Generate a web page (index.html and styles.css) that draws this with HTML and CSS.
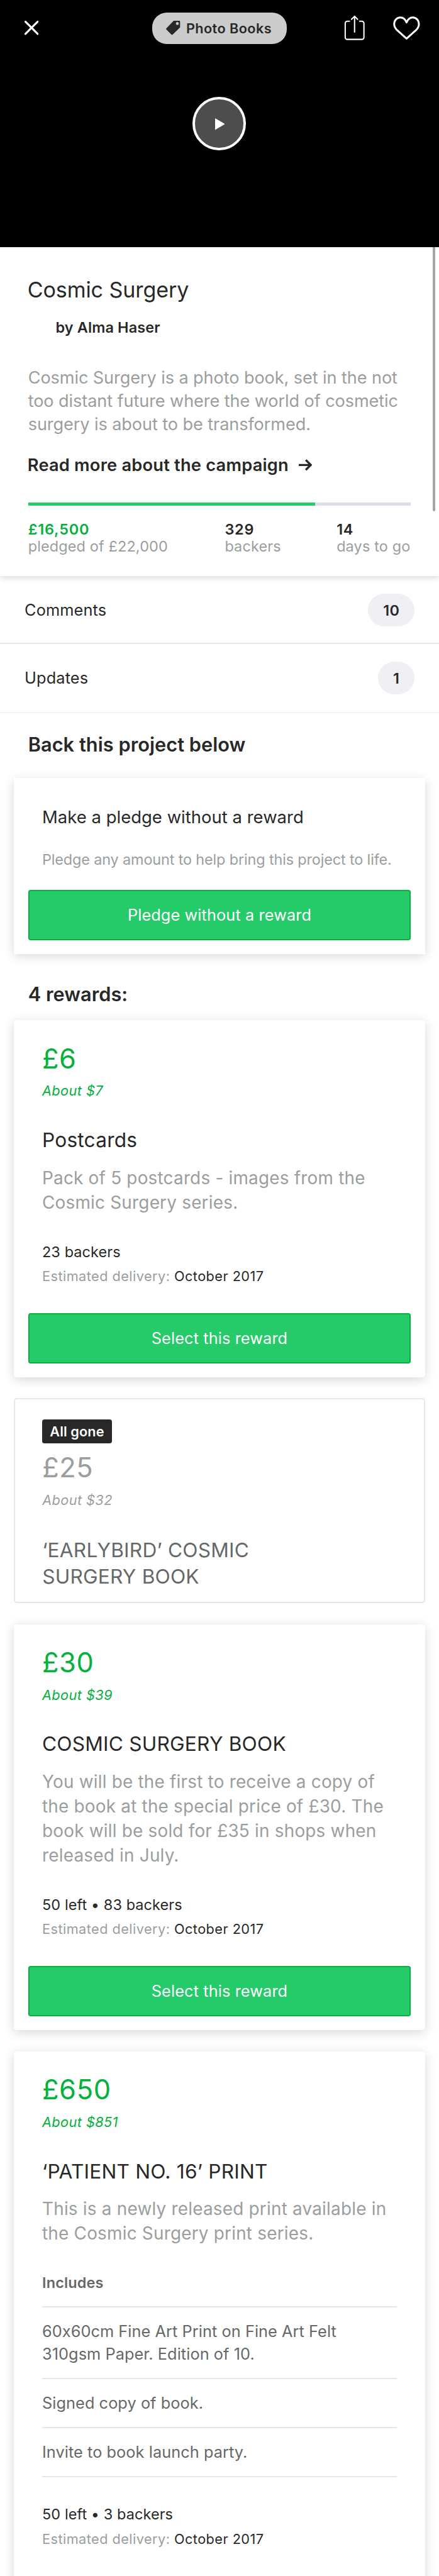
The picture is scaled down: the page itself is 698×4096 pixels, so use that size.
FILE: index.html
```html
<!DOCTYPE html>
<html lang="en">
<head>
<meta charset="utf-8">
<title>Cosmic Surgery</title>
<link rel="stylesheet" href="styles.css">
</head>
<body>
<main class="page">
  <header class="hero">
    <nav class="topbar">
      <svg class="icon-close" width="24" height="24" viewBox="0 0 24 24"><path d="M1.5 1.5l21 21M22.500 1.500l-21 21"/></svg>
      <span class="chip">
        <svg width="24" height="25" viewBox="0 0 24 25"><path fill-rule="evenodd" d="M13.500 0H22.500Q24 0 24 1.500V10.500Q24 11.500 23.300 12.200L11.300 23.700Q10.200 24.600 9.200 23.700L.6 15Q-.4 14 .6 12.900L12.200.7Q12.800 0 13.500 0ZM19.300 2.200A2.500 2.500 0 1 0 19.300 7.200A2.500 2.500 0 1 0 19.300 2.200Z"/></svg>
        Photo Books
      </span>
      <svg class="icon-share" width="36" height="44" viewBox="0 0 36 44"><path d="M9.300 10.500H6Q2 10.500 2 14.500V37.500Q2 41.500 6 41.500H30Q34 41.500 34 37.500V14.500Q34 10.500 30 10.500H26.700M18 29V2M12.800 7.200L18 2L23.200 7.200"/></svg>
      <svg class="icon-heart" width="46" height="40" viewBox="0 0 46 40"><path d="M23 10.500C20.500 4.500 17 2 12.500 2C6 2 1.900 7.200 1.900 13.500C1.900 17.500 3.800 20.500 6.500 23.300L23 38L39.500 23.300C42.200 20.500 44.100 17.500 44.100 13.500C44.100 7.200 40 2 33.500 2C29 2 25.500 4.500 23 10.500Z"/></svg>
    </nav>
    <div class="play"><svg width="17" height="20" viewBox="0 0 17 20"><path d="M0 0L17 10L0 20Z"/></svg></div>
  </header>

  <section class="summary">
    <h1 class="title">Cosmic Surgery</h1>
    <p class="byline">by Alma Haser</p>
    <p class="blurb">Cosmic Surgery is a photo book, set in the not<br>too distant future where the world of cosmetic<br>surgery is about to be transformed.</p>
    <a class="more">Read more about the campaign<svg width="23" height="20" viewBox="0 0 23 20"><path d="M0 10H20M12 1.500L20.500 10L12 18.500"/></svg></a>
    <div class="progress"><div class="progress-fill"></div></div>
    <div class="stats">
      <div><b class="raised">£16,500</b><span>pledged of £22,000</span></div>
      <div><b>329</b><span>backers</span></div>
      <div><b>14</b><span>days to go</span></div>
    </div>
  </section>

  <div class="row row-comments"><span>Comments</span><b class="badge badge-wide">10</b></div>
  <div class="row row-updates"><span>Updates</span><b class="badge">1</b></div>

  <h2 class="heading">Back this project below</h2>
  <section class="card pledge">
    <h3>Make a pledge without a reward</h3>
    <p>Pledge any amount to help bring this project to life.</p>
    <div class="button">Pledge without a reward</div>
  </section>

  <h2 class="heading heading-rewards">4 rewards:</h2>
  <div class="rewards">
    <section class="card reward">
      <div class="price">£6</div>
      <div class="about">About $7</div>
      <h3 class="name">Postcards</h3>
      <p class="desc">Pack of 5 postcards - images from the<br>Cosmic Surgery series.</p>
      <div class="backers">23 backers</div>
      <div class="delivery">Estimated delivery: <b>October 2017</b></div>
      <div class="button">Select this reward</div>
    </section>

    <section class="reward gone">
      <div class="tag">All gone</div>
      <div class="price">£25</div>
      <div class="about">About $32</div>
      <h3 class="name">‘EARLYBIRD’ COSMIC<br>SURGERY BOOK</h3>
    </section>

    <section class="card reward">
      <div class="price">£30</div>
      <div class="about">About $39</div>
      <h3 class="name">COSMIC SURGERY BOOK</h3>
      <p class="desc">You will be the first to receive a copy of<br>the book at the special price of £30. The<br>book will be sold for £35 in shops when<br>released in July.</p>
      <div class="backers">50 left • 83 backers</div>
      <div class="delivery">Estimated delivery: <b>October 2017</b></div>
      <div class="button">Select this reward</div>
    </section>

    <section class="card reward reward-last">
      <div class="price">£650</div>
      <div class="about">About $851</div>
      <h3 class="name">‘PATIENT NO. 16’ PRINT</h3>
      <p class="desc">This is a newly released print available in<br>the Cosmic Surgery print series.</p>
      <h4 class="includes">Includes</h4>
      <ul class="items">
        <li>60x60cm Fine Art Print on Fine Art Felt<br>310gsm Paper. Edition of 10.</li>
        <li>Signed copy of book.</li>
        <li>Invite to book launch party.</li>
      </ul>
      <div class="backers">50 left • 3 backers</div>
      <div class="delivery">Estimated delivery: <b>October 2017</b></div>
    </section>
  </div>
  <div class="scrollbar"></div>
</main>
</body>
</html>
```
FILE: styles.css
```css
* { box-sizing: border-box; margin: 0; padding: 0; }
html, body { background: #fff; overflow: hidden; }

.page {
  position: relative;
  zoom: 0.9307;
  width: 750px;
  height: 4402px;
  overflow: hidden;
  background: #fff;
  color: #282828;
  font-family: Inter, "Open Sans", sans-serif;
  font-feature-settings: "calt" 0;
  white-space: nowrap;
}
h1, h2, h3, h4 { font-weight: 400; }
svg { display: block; flex: none; }

/* Hero */
.hero { height: 422px; background: #000; padding-top: 21px; }
.topbar { display: flex; align-items: center; height: 54px; padding-left: 42px; }
.topbar svg { fill: none; stroke: #fff; stroke-linecap: round; stroke-linejoin: round; }
.icon-close { stroke-width: 3.4; }
.chip {
  display: flex; align-items: center; gap: 10px;
  width: 230px; height: 54px; margin-left: 194px; padding-left: 24px;
  border-radius: 25px; background: #ccc;
  font-size: 23.3px; font-weight: 600; letter-spacing: .45px;
}
.topbar .chip svg { fill: #282828; stroke: none; }
.icon-share { margin-left: 98px; stroke-width: 2.2; }
.icon-heart { margin-left: 48px; stroke-width: 3.2; }
.play {
  display: flex; align-items: center; justify-content: center;
  width: 91px; height: 91px; margin: 91px 0 0 329px; padding: 2px 0 0 2px;
  border: 4.4px solid #fff; border-radius: 50%; background: #4d4d4d;
}
.play svg { fill: #fff; }

/* Project summary */
.summary { position: relative; height: 562px; padding: 51.4px 48px 0; background: #fff; box-shadow: 0 3px 10px rgba(0,0,0,.15); }
.title { font-size: 36.6px; line-height: 44px; letter-spacing: -.1px; margin-left: -1px; }
.byline { margin: 27.6px 0 0 47px; font-size: 25.2px; line-height: 30px; font-weight: 600; letter-spacing: .15px; }
.blurb { margin-top: 49.9px; font-size: 29.1px; line-height: 40px; letter-spacing: -.08px; color: #9b9e9e; }
.more { display: flex; align-items: center; gap: 17px; margin: 31.9px 0 0 -1px; font-size: 29.3px; line-height: 36px; font-weight: 600; letter-spacing: .22px; }
.more svg { fill: none; stroke: #282828; stroke-width: 3.6; }
.progress { height: 6px; margin-top: 45.2px; background: #dadde6; }
.progress-fill { width: 75%; height: 6px; background: #25cb68; }
.stats { display: grid; grid-template-columns: 336px 191px auto; margin-top: 25.2px; font-size: 25.2px; line-height: 30px; letter-spacing: .15px; color: #9b9e9e; }
.stats b, .stats span { display: block; }
.stats b { font-weight: 600; letter-spacing: .9px; color: #282828; }
.stats .raised { color: #03b13b; }

/* Link rows */
.row { display: flex; align-items: center; justify-content: space-between; height: 118px; padding: 0 42px; border-bottom: 2.16px solid #e6e7e7; font-size: 27.2px; letter-spacing: .15px; }
.row-comments { height: 116px; padding-top: 2px; }
.row-updates { border-bottom-color: #f5f5f5; }
.badge { width: 62px; height: 56px; padding-top: 1px; border-radius: 28px; background: #efeff4; font-size: 25.2px; line-height: 55px; font-weight: 600; text-align: center; }
.badge-wide { width: 79px; }

.heading { margin: 34px 0 0 48px; font-size: 33px; line-height: 40px; font-weight: 600; letter-spacing: .05px; }
.heading-rewards { margin-top: 48px; }

/* Cards */
.card { margin: 0 24px; padding: 0 24px 24px; background: #fff; box-shadow: 0 4px 18px rgba(0,0,0,.16); }
.button { height: 86px; border: 2.16px solid #03b13b; border-radius: 4px; background: #25cb68; color: #fff; font-size: 27.2px; line-height: 82.6px; letter-spacing: .12px; text-align: center; }
.pledge { margin-top: 37px; padding-top: 49.9px; }
.pledge h3 { margin-left: 24px; font-size: 29.5px; line-height: 36px; letter-spacing: .03px; }
.pledge p { margin: 38.5px 0 36.6px 24px; font-size: 25.2px; line-height: 30px; letter-spacing: -.16px; color: #9b9e9e; }

.rewards { display: flex; flex-direction: column; gap: 36px; margin-top: 25px; }
.reward { border-radius: 5px; padding-top: 37.3px; }
.reward > :not(.button) { margin-left: 24px; }
.price { font-size: 46.6px; line-height: 56px; letter-spacing: .7px; color: #03b13b; }
.about { margin-top: 13.1px; font-size: 23.3px; line-height: 30px; font-style: italic; letter-spacing: .47px; color: #03b13b; }
.name { margin-top: 46.1px; font-size: 34px; line-height: 46px; letter-spacing: .24px; }
.desc { margin-top: 20.5px; font-size: 30px; line-height: 41.8px; letter-spacing: .22px; color: #9b9e9e; }
.backers { margin-top: 42.2px; font-size: 25.2px; line-height: 42px; letter-spacing: .1px; }
.delivery { font-size: 23.3px; line-height: 42px; letter-spacing: .5px; color: #9b9e9e; }
.delivery b { font-weight: 400; color: #282828; }
.reward .button { margin-top: 41.3px; }

.gone { height: 350px; margin: 0 24px; padding: 34px 22px 0; border: 2.16px solid #e6e7e7; background: #fff; }
.tag { width: 119px; height: 41px; border-radius: 4px; background: #282828; color: #fff; font-size: 23.3px; line-height: 41px; font-weight: 600; letter-spacing: .14px; text-align: center; }
.gone .price { margin-top: 13px; color: #9b9e9e; }
.gone .about { color: #9b9e9e; }
.gone .name { margin-top: 47.4px; color: #656868; }

.reward-last { height: 1000px; }
.includes { margin-top: 47.8px; font-size: 25.2px; line-height: 30px; font-weight: 600; letter-spacing: .18px; color: #656868; }
.items { list-style: none; margin: 25px 24px 0 0; border-top: 2.16px solid #e6e7e7; }
.items li { padding: 22px 0; border-bottom: 2.16px solid #e6e7e7; font-size: 27.2px; line-height: 38px; letter-spacing: .07px; color: #656868; }

.scrollbar { position: absolute; left: 739px; top: 422px; width: 5px; height: 452px; border-radius: 0 0 3px 3px; background: #a5a5a5; }
```
